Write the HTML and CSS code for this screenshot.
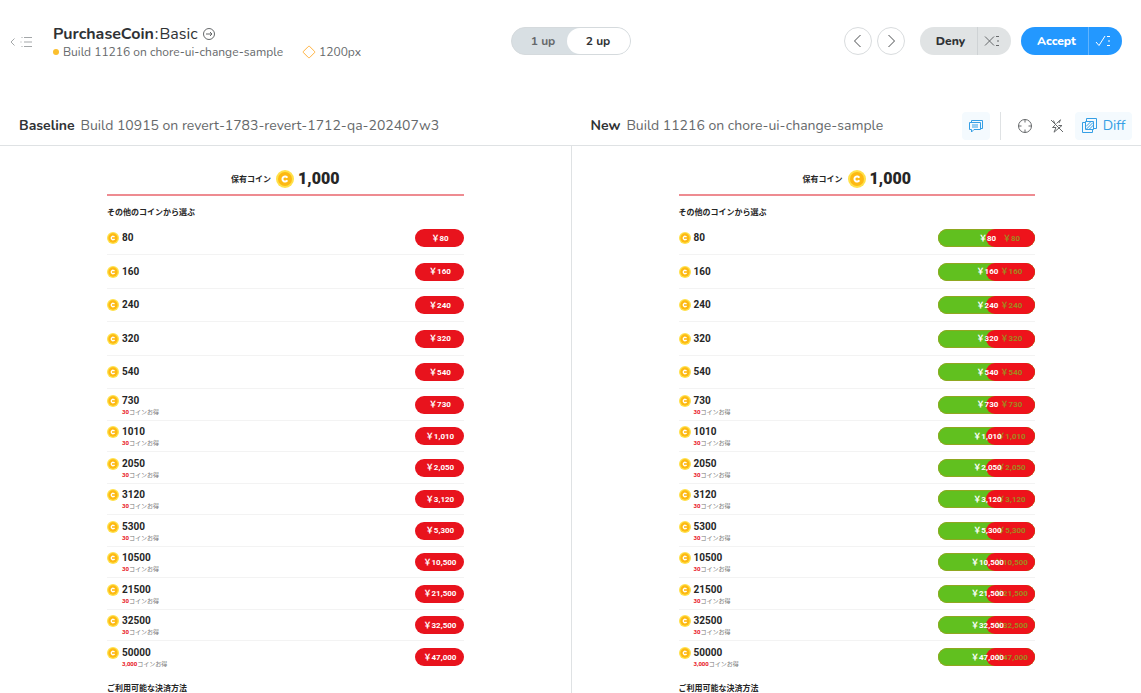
FILE: index.html
```html
<!DOCTYPE html>
<html lang="en">
<head>
<meta charset="utf-8">
<meta name="viewport" content="width=device-width, initial-scale=1">
<title>PurchaseCoin: Basic</title>
<link rel="stylesheet" href="styles.css">
</head>
<body>
<header class="topbar">
  <div class="topbar-left">
    <button class="icon-btn list-btn" aria-label="Back to list">
      <svg width="23" height="12" viewBox="0 0 23 12" fill="none" stroke="#a4a7a9"><path d="M4.500 2.500 1 6l3.500 3.500M11.500 1.500h1M14 1.500h8M10.500 6h1M14 6h8M11.500 10.500h1M14 10.500h8"/></svg>
    </button>
    <div class="title-block">
      <h1 class="title"><b>PurchaseCoin</b><span class="colon">:</span><span>Basic</span>
        <a href="#" class="title-link" aria-label="Open component"><svg width="12" height="12" viewBox="0 0 12 12" fill="none" stroke="#66696b"><circle cx="6" cy="6" r="5.500"/><path d="M3 6h6M7 4l2 2-2 2"/></svg></a>
      </h1>
      <p class="meta">
        <span class="dot"></span><span>Build 11216 on chore-ui-change-sample</span>
        <svg class="diamond" width="14" height="14" viewBox="0 0 14 14" fill="none" stroke="#ffb23e"><path d="M6.300 1.500Q7 .8 7.700 1.500L12.500 6.300Q13.200 7 12.500 7.700L7.700 12.500Q7 13.200 6.300 12.500L1.500 7.700Q.8 7 1.500 6.300Z"/></svg>
        <span>1200px</span>
      </p>
    </div>
  </div>
  <div class="switch">
    <button class="switch-item">1 up</button>
    <button class="switch-item active">2 up</button>
  </div>
  <div class="topbar-right">
    <button class="round" aria-label="Previous"><svg width="10" height="14" viewBox="0 0 10 14" fill="none" stroke="#4a4d4f"><path d="M7.500 1 1.500 7l6 6"/></svg></button>
    <button class="round" aria-label="Next"><svg width="10" height="14" viewBox="0 0 10 14" fill="none" stroke="#4a4d4f"><path d="m2.500 1 6 6-6 6"/></svg></button>
    <div class="split deny">
      <button class="split-main">Deny</button>
      <button class="split-more" aria-label="Deny options"><svg width="16" height="12" viewBox="0 0 16 12" fill="none" stroke="currentColor"><path d="m1 1.500 9 9M10 1.500l-9 9M12 1.500h3M13 6h2M12 10.500h3"/></svg></button>
    </div>
    <div class="split accept">
      <button class="split-main">Accept</button>
      <button class="split-more" aria-label="Accept options"><svg width="16" height="12" viewBox="0 0 16 12" fill="none" stroke="currentColor"><path d="m1 7 3 3.500L10 1M12 1.500h3M13 6h2M12 10.500h3"/></svg></button>
    </div>
  </div>
</header>

<main class="compare">
  <section class="panel">
    <div class="panel-head">
      <h2 class="panel-title">Baseline</h2>
      <span class="panel-build">Build 10915 on revert-1783-revert-1712-qa-202407w3</span>
    </div>
    <div class="shot" lang="ja" data-mode="baseline"></div>
  </section>
  <section class="panel">
    <div class="panel-head">
      <h2 class="panel-title">New</h2>
      <span class="panel-build">Build 11216 on chore-ui-change-sample</span>
      <div class="tools">
        <button class="tool on" aria-label="Comments"><svg width="16" height="14" viewBox="0 0 16 14" fill="none" stroke="currentColor"><path d="M3.500 3.500v-2h11v8h-2M1.500 3.500h11v7H6L3.500 13v-2.500h-2ZM4 6h6M4 8h6"/></svg></button>
        <span class="rule"></span>
        <button class="tool" aria-label="Focus"><svg width="16" height="16" viewBox="0 0 16 16" fill="none" stroke="currentColor"><circle cx="8" cy="8" r="6.500"/><path d="M8 1.500v3M8 11.500v3M1.500 8h3M11.500 8h3"/></svg></button>
        <button class="tool" aria-label="Strobe"><svg width="14" height="14" viewBox="0 0 14 14" fill="none" stroke="currentColor"><path d="M10.500.8 6.500 4.500M9 4l1.500-3.200M8.500 6.500H12L4 13.200 6 8.500H2.500L5 6.200M1 1l12 12M3.500 1.500 5 5"/></svg></button>
        <button class="tool on diff-btn"><svg width="15" height="15" viewBox="0 0 15 15" fill="none" stroke="currentColor"><path d="M4.500 3.500v-3h10v10h-3M3.500 4.500h-3v10h10v-3M3.500 3.500h8v8h-8ZM4 8.500l4.500-4.500M4.500 11l6.500-6.500M7 11.500l4.500-4.500"/></svg>Diff</button>
      </div>
    </div>
    <div class="shot" lang="ja" data-mode="diff"></div>
  </section>
</main>
<script src="main.js"></script>
</body>
</html>
```

FILE: styles.css
```css
* { box-sizing: border-box; }
body {
  margin: 0;
  min-height: 100vh;
  display: flex;
  flex-direction: column;
  background: #fff;
  color: #2f3235;
  font-family: Nunito, "Open Sans", "Noto Sans", sans-serif;
  font-size: 14px;
}
h1, h2, h3, p, ul { margin: 0; padding: 0; font-weight: 400; }
button { margin: 0; padding: 0; border: 0; background: none; color: inherit; font: inherit; }
svg { display: block; flex: none; }

.topbar {
  display: grid;
  grid-template-columns: 1fr auto 1fr;
  align-items: center;
  padding: 22px 19px 0;
  height: 60px;
}
.topbar-left { display: flex; align-items: center; gap: 20px; margin-left: -9px; padding-top: 2px; white-space: nowrap; }
.title { display: flex; align-items: center; font-size: 16px; line-height: 20px; }
.title b { font-weight: 700; }
.colon { margin: 0 1px; }
.title-link { margin-left: 5px; }
.meta { display: flex; align-items: center; font-size: 12px; line-height: 16px; color: #66696b; }
.dot { width: 6px; height: 6px; margin-right: 4px; border-radius: 50%; background: #fbbf2d; }
.diamond { margin: 0 3px 0 19px; }

.switch {
  display: flex;
  width: 120px;
  height: 28px;
  border: 1px solid #d5dadd;
  border-radius: 14px;
  background: #d8dfe3;
  font-size: 12px;
  font-weight: 700;
}
.switch-item { flex: 1; color: #66696b; padding-left: 8px; }
.switch-item.active { flex: none; width: 63px; padding: 0; border-radius: 13px; background: #fff; color: #2f3235; }

.topbar-right { display: flex; justify-content: flex-end; align-items: center; gap: 5px; }
.round {
  display: grid;
  place-items: center;
  width: 28px;
  height: 28px;
  border: 1px solid #d9dcde;
  border-radius: 50%;
}
.split { display: flex; height: 28px; margin-left: 10px; border-radius: 14px; font-size: 12px; font-weight: 800; }
.split + .split { margin-left: 5px; }
.split-more { display: grid; place-items: center; width: 34px; padding-right: 5px; border-left: 1px solid; }
.deny { background: #e0e3e4; }
.deny .split-main { width: 57px; padding-left: 4px; }
.deny .split-more { border-color: #cfd3d5; color: #66696b; }
.accept { background: #2398ff; color: #fff; }
.accept .split-main { width: 67px; padding-left: 4px; }
.accept .split-more { border-color: #61b4ff; }

.compare { flex: 1; display: grid; grid-template-columns: 1fr 1fr; margin-top: 46px; }
.panel { min-width: 0; }
.panel-head {
  display: flex;
  align-items: center;
  height: 40px;
  padding: 0 9px 0 19px;
  border-bottom: 1px solid #dfe2e4;
  white-space: nowrap;
}
.panel + .panel .panel-head { padding-left: 20px; }
.panel-title { font-size: 14px; font-weight: 700; margin-right: 6px; }
.panel-build { color: #66696b; }
.tools { display: flex; align-items: center; margin-left: auto; color: #66696b; }
.tool { display: flex; align-items: center; justify-content: center; gap: 6px; width: 28px; height: 28px; margin-right: 4px; border-radius: 4px; }
.tool.on { background: #f4fafe; color: #359fe5; }
.diff-btn { width: 57px; margin-right: 0; }
.rule { width: 1px; height: 28px; margin: 0 10px 0 6px; background: #dfe2e4; }

.shot {
  min-height: calc(100% - 40px);
  padding: 22px 107px 0;
  font-family: Roboto, "Noto Sans CJK JP", sans-serif;
  color: #262626;
}
.panel + .panel .shot { padding-right: 106px; border-left: 1px solid #dfe2e4; }
.balance {
  display: flex;
  align-items: center;
  justify-content: center;
  height: 28px;
  padding-bottom: 5px;
  border-bottom: 2px solid #ee8b91;
  font-size: 8px;
  font-weight: 700;
}
.balance .coin { width: 18px; height: 18px; margin: 0 4px 0 5px; }
.balance strong { font-size: 16px; }
.section-title { font-size: 8px; line-height: 12px; font-weight: 700; }
.balance + .section-title { margin: 11px 0 3px; }
.rows { display: grid; grid-auto-rows: 33px 34px; list-style: none; }
.rows.bonus { grid-auto-rows: 32px 31px; }
.row { display: flex; align-items: center; justify-content: space-between; border-bottom: 1px solid #f3f3f3; }
.rows.bonus .row:last-child { border-bottom: 0; }
.amount { display: grid; grid-template-columns: 12px auto; align-items: center; column-gap: 3px; font-size: 10px; line-height: 14px; font-weight: 700; }
.amount .coin { width: 12px; height: 12px; }
.bonus-note { grid-column: 2; font-size: 6px; line-height: 8px; font-weight: 400; color: #777; }
.bonus-note b { color: #e8131d; }
.price {
  position: relative;
  display: flex;
  align-items: center;
  justify-content: center;
  width: 49px;
  height: 18px;
  padding: 0 0 2px 2px;
  border-radius: 9px;
  background: #e8131d;
  color: #fff;
  font-size: 8px;
  font-weight: 700;
}
.price.changed { width: 97px; background: #61c01f; box-shadow: inset 0 0 0 1px #8fa820; }
.price-before {
  position: absolute;
  top: 0;
  right: 0;
  display: flex;
  align-items: center;
  justify-content: center;
  width: 49px;
  height: 18px;
  padding: 0 0 2px 2px;
  border-radius: 9px;
  background: #ee131b;
  color: #a08a20;
}
.price-now { position: relative; }
.rows.bonus + .section-title { margin-top: 10px; }
```

FILE: main.js
```js
const plain = [[80, '80'], [160, '160'], [240, '240'], [320, '320'], [540, '540']];
const bonus = [
  [730, '730'], [1010, '1,010'], [2050, '2,050'], [3120, '3,120'], [5300, '5,300'],
  [10500, '10,500'], [21500, '21,500'], [32500, '32,500'], [50000, '47,000', '3,000'],
];

const coin = `<svg class="coin" viewBox="0 0 18 18"><circle cx="9" cy="9" r="9" fill="#ffe14a"/><circle cx="9" cy="9" r="7" fill="#fdb913"/><path d="M11.300 7.700A2.600 2.600 0 1 0 11.300 10.300" fill="none" stroke="#fff" stroke-width="2"/></svg>`;

const priceButton = (price, diff) => diff
  ? `<button class="price changed"><span class="price-before" aria-hidden="true">￥${price}</span><span class="price-now">￥${price}</span></button>`
  : `<button class="price">￥${price}</button>`;

const row = (count, price, note, diff) => `<li class="row">
  <div class="amount">${coin}<span>${count}</span>${note ? `<span class="bonus-note"><b>${note}</b>コインお得</span>` : ''}</div>
  ${priceButton(price, diff)}
</li>`;

document.querySelectorAll('.shot').forEach((shot) => {
  const diff = shot.dataset.mode === 'diff';
  shot.innerHTML = `
    <div class="balance"><span>保有コイン</span>${coin}<strong>1,000</strong></div>
    <h3 class="section-title">その他のコインから選ぶ</h3>
    <ul class="rows">${plain.map(([c, p]) => row(c, p, '', diff)).join('')}</ul>
    <ul class="rows bonus">${bonus.map(([c, p, n]) => row(c, p, n || '30', diff)).join('')}</ul>
    <h3 class="section-title">ご利用可能な決済方法</h3>`;
});
```
